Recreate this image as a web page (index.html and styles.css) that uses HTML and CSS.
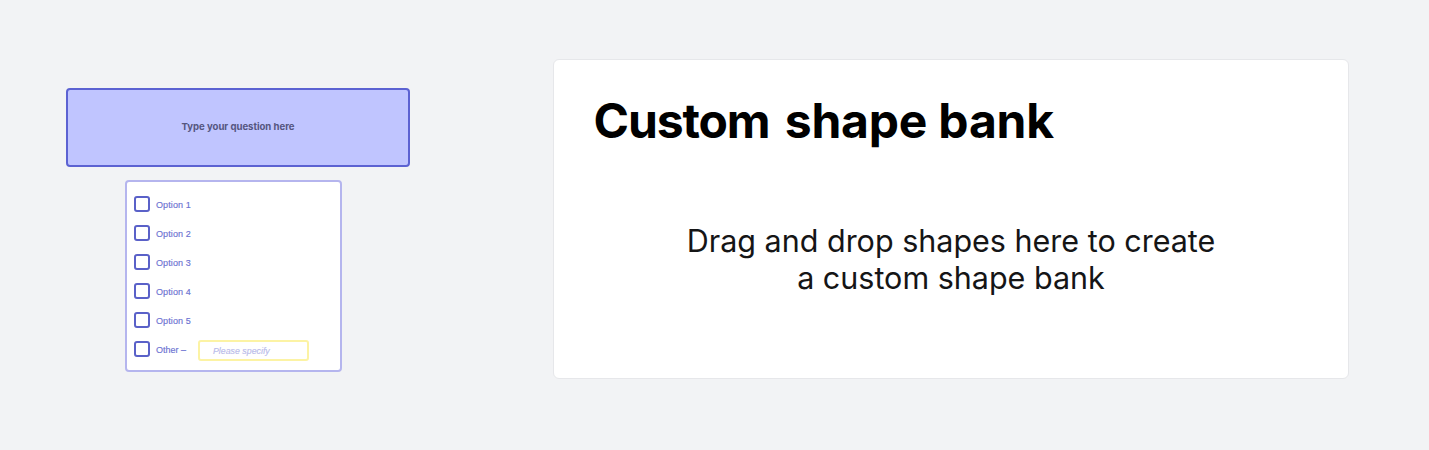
FILE: index.html
```html
<!DOCTYPE html>
<html lang="en">
<head>
<meta charset="utf-8">
<title>Custom shape bank</title>
<link rel="stylesheet" href="styles.css">
</head>
<body>
<main class="board">
  <section class="form">
    <div class="question">Type your question here</div>
    <ul class="options">
      <li class="option"><span class="box"></span><span class="label">Option 1</span></li>
      <li class="option"><span class="box"></span><span class="label">Option 2</span></li>
      <li class="option"><span class="box"></span><span class="label">Option 3</span></li>
      <li class="option"><span class="box"></span><span class="label">Option 4</span></li>
      <li class="option"><span class="box"></span><span class="label">Option 5</span></li>
      <li class="option"><span class="box"></span><span class="label other">Other –</span><span class="specify">Please specify</span></li>
    </ul>
  </section>
  <section class="bank">
    <h1 class="title"><span class="title-lead">Custom</span> shape bank</h1>
    <p class="hint">Drag and drop shapes here to create<br>a custom shape bank</p>
  </section>
</main>
</body>
</html>
```

FILE: styles.css
```css
* { box-sizing: border-box; }
body { margin: 0; background: #f2f3f5; font-family: Inter, sans-serif; }
.board { display: flex; align-items: flex-start; height: 450px; padding: 59px 0 0 66px; overflow: hidden; }
.form { width: 344px; margin: 29px 143px 0 0; }
.question { display: flex; align-items: center; justify-content: center; height: 79px; padding-bottom: 2px; border: 2px solid #5c62d2; border-radius: 4px; background: #c0c5ff; color: #55567f; font-size: 9.6px; font-weight: 700; letter-spacing: -0.03px; }
.options { width: 217px; height: 192px; margin: 13px 0 0 59px; padding: 8px 0 0 7px; border: 2px solid #b5b5ee; border-radius: 4px; background: #fff; list-style: none; font-family: "Liberation Sans", sans-serif; font-size: 9px; letter-spacing: 0.12px; color: #6c72d2; -webkit-text-stroke: 0.15px; }
.option { display: flex; align-items: center; height: 29px; padding-bottom: 1px; }
.label { padding-top: 2px; }
.box { width: 16px; height: 16px; margin-right: 6px; border: 2px solid #5a61c8; border-radius: 3px; }
.other { width: 42px; letter-spacing: 0; }
.specify { width: 111px; height: 21px; margin-top: 2px; padding-left: 13px; border: 2px solid #fcf3a4; border-radius: 3px; color: #b9bbea; font-style: italic; letter-spacing: 0; font-size: 8.8px; line-height: 18px; }
.bank { width: 796px; height: 320px; padding: 33px 40px; border: 1px solid #e6e7ea; border-radius: 6px; background: #fff; color: #151516; }
.title { margin: 0 0 0 -0.5px; font-size: 48px; font-weight: 700; line-height: 56px; letter-spacing: -0.2px; color: #000; white-space: nowrap; }
.title-lead { margin-right: 4px; letter-spacing: -1.1px; }
.hint { margin: 73px 0 0; font-size: 30.5px; line-height: 37px; text-align: center; white-space: nowrap; }
```
